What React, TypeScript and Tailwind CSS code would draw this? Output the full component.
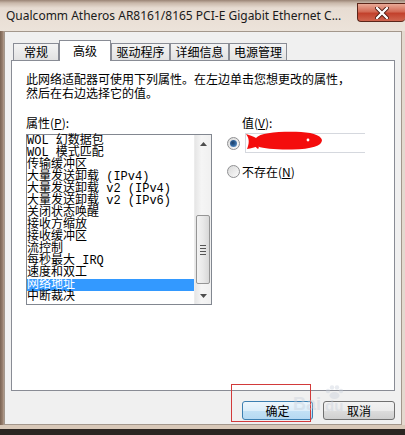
import React from "react";

const cjk = { fontFamily: '"Noto Sans CJK SC", "Noto Sans", sans-serif' };
const listFont = { fontFamily: '"Liberation Mono", "Noto Sans CJK SC", monospace' };

const tabs = [
  { label: "常规", w: "w-[46px]" },
  { label: "高级", w: "w-[52px]", active: true },
  { label: "驱动程序", w: "w-[59px]" },
  { label: "详细信息", w: "w-[59px]" },
  { label: "电源管理", w: "w-[58px]" },
];

const props = [
  "WOL 幻数据包",
  "WOL 模式匹配",
  "传输缓冲区",
  "大量发送卸载 (IPv4)",
  "大量发送卸载 v2 (IPv4)",
  "大量发送卸载 v2 (IPv6)",
  "关闭状态唤醒",
  "接收方缩放",
  "接收缓冲区",
  "流控制",
  "每秒最大 IRQ",
  "速度和双工",
  "网络地址",
  "中断裁决",
];

function Radio({ checked }: { checked?: boolean }) {
  return (
    <div className="w-[13px] h-[13px] shrink-0 rounded-full border border-[#8f9092] bg-gradient-to-br from-[#d9d9d9] to-[#fbfbfb] flex items-center justify-center">
      {checked && (
        <div className="w-[7px] h-[7px] rounded-full bg-[radial-gradient(circle_at_40%_40%,#1c3e66_0%,#2d5f96_40%,#6fa6dc_100%)]" />
      )}
    </div>
  );
}

function Arrow({ up }: { up?: boolean }) {
  return (
    <div className="h-[17px] flex items-center justify-center">
      <svg width="7" height="4" viewBox="0 0 7 4">
        {up ? <path d="M0 4 L3.5 0 L7 4 Z" fill="#4d4d4d" /> : <path d="M0 0 L3.5 4 L7 0 Z" fill="#4d4d4d" />}
      </svg>
    </div>
  );
}

export default function App() {
  return (
    <div className="w-[405px] h-[435px] relative overflow-hidden flex flex-col bg-[linear-gradient(to_right,#7a6353_0px,#9c8473_3px,#d6c6b8_5px,#e4d9cf_100%)]">
      {/* title bar */}
      <div className="h-[31px] shrink-0 flex items-start bg-[linear-gradient(to_bottom,#9a8475_0px,#c9b8aa_3px,#e7dcd2_8px,#ece3da_100%)]">
        <div className="pl-[6px] pt-[8px] text-[12px] leading-[16px] text-[#1a1a1a] whitespace-nowrap" style={{ fontFamily: '"Noto Sans", "Open Sans", sans-serif' }}>
          Qualcomm Atheros AR8161/8165 PCI-E Gigabit Ethernet C...
        </div>
        <div className="ml-auto mt-[3px] w-[48px] h-[19px] rounded-b-[4px] border border-[#5b2519] border-r-0 bg-[linear-gradient(to_bottom,#e9aa97_0%,#d36a55_45%,#c2412c_55%,#d0654f_100%)] flex items-center justify-center">
          <svg width="14" height="12" viewBox="0 0 14 12">
            <path d="M2 1 L12 11 M12 1 L2 11" stroke="#4a1a10" strokeWidth="4" strokeLinecap="round" />
            <path d="M2 1 L12 11 M12 1 L2 11" stroke="#ffffff" strokeWidth="2.4" strokeLinecap="round" />
          </svg>
        </div>
      </div>

      {/* client area */}
      <div className="h-[394px] shrink-0 ml-[4px] mr-[3px] flex flex-col bg-[#f0f0f0] border border-[#a3978c]" style={cjk}>
        {/* tabs */}
        <div className="flex items-end pl-[8px] pt-[7px] h-[28px]">
          {tabs.map((t) =>
            t.active ? (
              <div
                key={t.label}
                className={`${t.w} h-[21px] -mb-[1px] relative z-10 bg-white border border-b-0 border-[#898c95] flex items-center justify-center text-[12px] text-black`}
              >
                {t.label}
              </div>
            ) : (
              <div
                key={t.label}
                className={`${t.w} h-[17px] bg-gradient-to-b from-[#f4f4f4] to-[#e2e2e2] border border-b-0 border-[#898c95] flex items-center justify-center text-[12px] text-black`}
              >
                {t.label}
              </div>
            )
          )}
        </div>

        {/* panel */}
        <div className="mx-[6px] h-[331px] bg-white border border-[#898c95] flex flex-col pl-[14px] pt-[11px] text-[12px] text-black">
          <div className="leading-[14px]">
            <div>此网络适配器可使用下列属性。在左边单击您想更改的属性，</div>
            <div>然后在右边选择它的值。</div>
          </div>

          <div className="flex mt-[16px] gap-[15px]">
            {/* left column */}
            <div className="w-[186px] flex flex-col">
              <div className="leading-[14px] h-[18px]">
                属性(<span className="underline">P</span>):
              </div>
              <div className="h-[171px] border border-[#828790] flex">
                <div className="flex-1 flex flex-col text-[12px] leading-[12px] whitespace-nowrap" style={listFont}>
                  {props.map((p) => (
                    <div
                      key={p}
                      className={p === "网络地址" ? "h-[12px] bg-[#3399ff] text-white" : "h-[12px] text-black"}
                    >
                      {p}
                    </div>
                  ))}
                </div>
                <div className="w-[17px] flex flex-col bg-[linear-gradient(to_right,#e6e6e6,#f5f5f5_40%,#f0f0f0)] border-l border-[#ececec]">
                  <Arrow up />
                  <div className="h-[63px]" />
                  <div className="h-[69px] mx-[1px] rounded-[2px] border border-[#959595] bg-gradient-to-r from-[#f3f3f3] via-[#e9e9e9] to-[#d8d8d8] flex items-center justify-center">
                    <div className="flex flex-col gap-[2px]">
                      <div className="w-[6px] h-[1px] bg-[#555]" />
                      <div className="w-[6px] h-[1px] bg-[#555]" />
                      <div className="w-[6px] h-[1px] bg-[#555]" />
                      <div className="w-[6px] h-[1px] bg-[#555]" />
                    </div>
                  </div>
                  <div className="flex-1" />
                  <Arrow />
                </div>
              </div>
            </div>

            {/* right column */}
            <div className="flex flex-col">
              <div className="pl-[15px] leading-[14px] h-[14px]">
                值(<span className="underline">V</span>):
              </div>
              <div className="flex items-center mt-[3px] h-[20px]">
                <Radio checked />
                <div className="ml-[5px] w-[120px] h-[20px] border border-[#d5d8de] border-r-0 relative">
                  <svg className="absolute left-[0px] top-[-3px]" width="78" height="20" viewBox="0 0 78 20">
                    <path
                      d="M0 3 C4 4 8 6 10 7 C14 2 30 0.5 50 0.8 C64 1 75 4 76 9 C76 15 66 18 46 18.5 C30 18.8 18 17.5 12 15.5 C9 16 5 17.5 1 18 C3 13 4 8 0 3 Z"
                      fill="#f40d0d"
                    />
                    <path d="M8 12 C12 13 14 16 12 18 C10 17 9 15 8 12 Z" fill="#f40d0d" />
                    <circle cx="62" cy="9" r="1.4" fill="#ffffff" />
                  </svg>
                </div>
              </div>
              <div className="flex items-center mt-[12px] h-[13px] gap-[2px]">
                <Radio />
                <span className="leading-[13px]">
                  不存在(<span className="underline">N</span>)
                </span>
              </div>
            </div>
          </div>
        </div>

        {/* buttons */}
        <div className="flex justify-end gap-[10px] mr-[6px] mt-[10px]">
          <div className="w-[71px] h-[19px] rounded-[3px] border border-[#3c7fb1] bg-[linear-gradient(to_bottom,#edf6fc_0%,#dceefa_50%,#c3e1f5_51%,#b5d9f2_100%)] flex items-center justify-center text-[12px] text-black">
            确定
          </div>
          <div className="w-[72px] h-[19px] rounded-[3px] border border-[#707070] bg-[linear-gradient(to_bottom,#f2f2f2_0%,#ebebeb_50%,#dddddd_51%,#cfcfcf_100%)] flex items-center justify-center text-[12px] text-black">
            取消
          </div>
        </div>
      </div>

      {/* bottom frame */}
      <div className="h-[4px] shrink-0 bg-[#d8c8b8]" />
      <div className="flex-1 bg-[#2b2521]" />

      {/* annotation box */}
      <div className="absolute left-[231px] top-[384px] w-[80px] h-[38px] border border-[#d23a3a]" />

      {/* watermark */}
      <div className="absolute left-[293px] top-[395px] opacity-40 text-[#c6ceda] pointer-events-none text-[18px] font-bold leading-[18px]" style={{ fontFamily: '"Liberation Sans", sans-serif' }}>
        Bai
      </div>
      <svg className="absolute left-[324px] top-[385px] opacity-40 pointer-events-none" width="20" height="14" viewBox="0 0 20 14">
        <circle cx="4" cy="6" r="2.2" fill="#c6ceda" />
        <circle cx="8" cy="2.5" r="2.2" fill="#c6ceda" />
        <circle cx="13" cy="2.5" r="2.2" fill="#c6ceda" />
        <circle cx="17" cy="6" r="2.2" fill="#c6ceda" />
        <ellipse cx="10.5" cy="10.5" rx="5" ry="3.5" fill="#c6ceda" />
      </svg>
      <div className="absolute left-[325px] top-[398px] opacity-40 text-[#c6ceda] pointer-events-none text-[15px] font-bold leading-[15px]" style={{ fontFamily: '"Liberation Sans", sans-serif' }}>
        du
      </div>
    </div>
  );
}
